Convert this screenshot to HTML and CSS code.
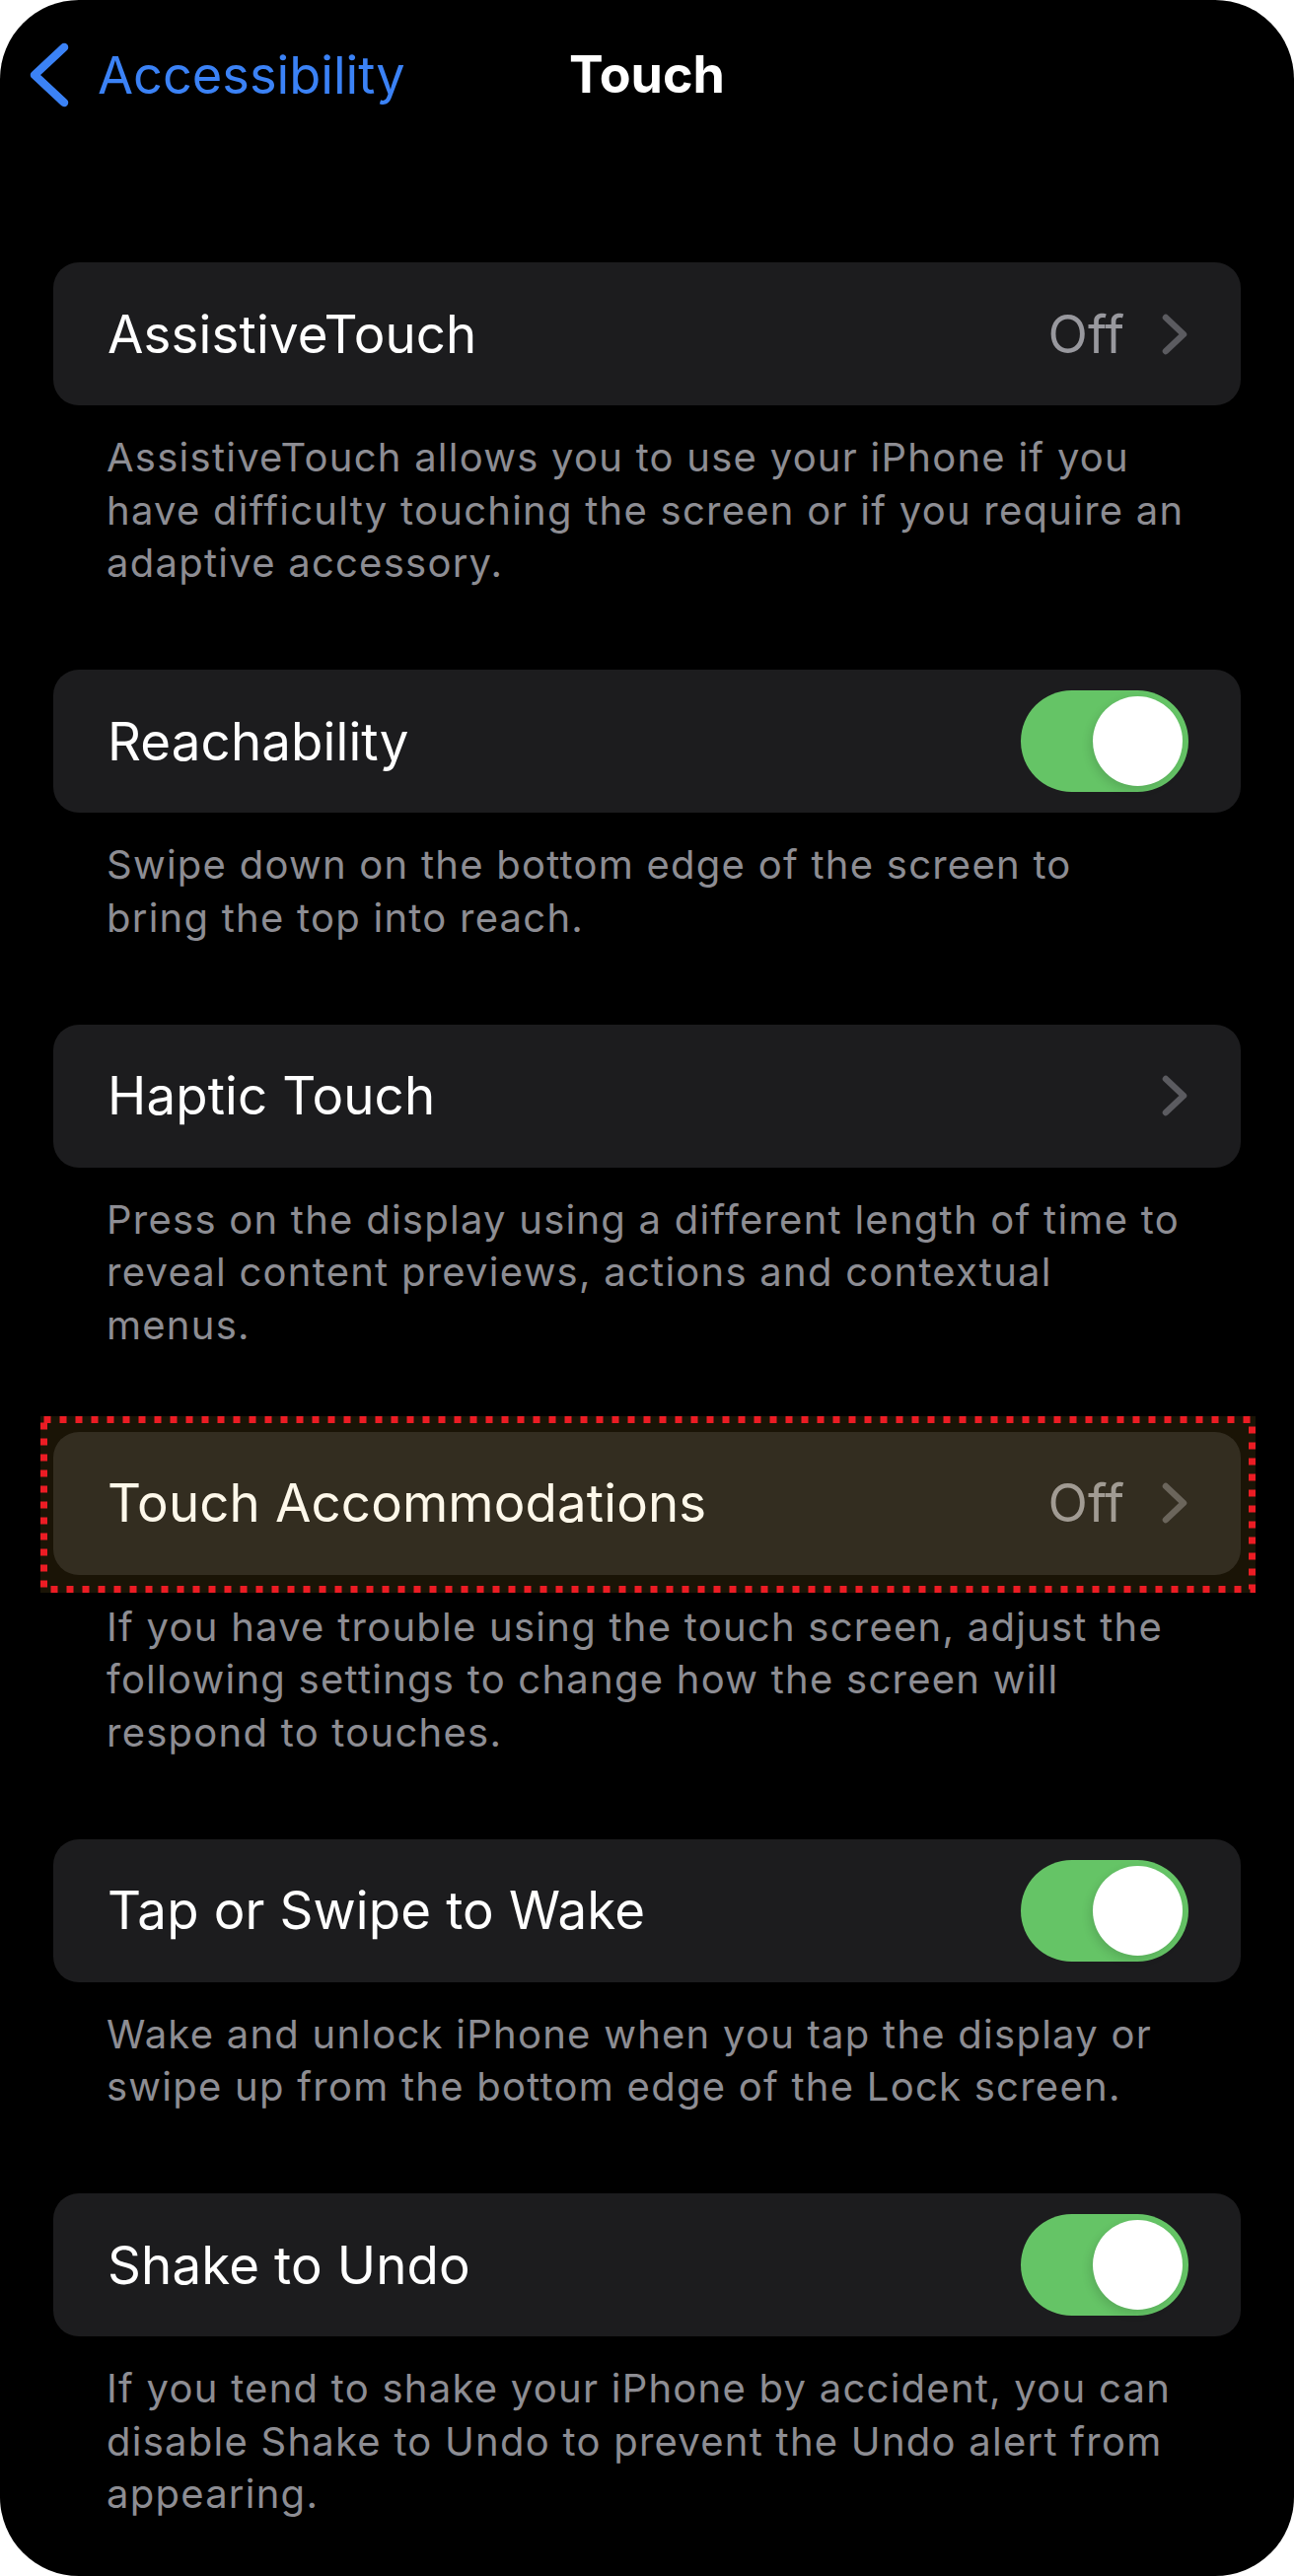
FILE: index.html
```html
<!DOCTYPE html>
<html lang="en">
<head>
<meta charset="utf-8">
<title>Touch</title>
<link rel="stylesheet" href="styles.css">
</head>
<body>
<div class="phone">
  <header class="nav">
    <a class="back">
      <svg class="back-chev" width="44" height="70" viewBox="0 0 44 70"><path d="M38 7 L8 35 L38 63" fill="none" stroke="#3b82f6" stroke-width="8.5" stroke-linecap="round" stroke-linejoin="round"/></svg>
      <span>Accessibility</span>
    </a>
    <h1 class="title">Touch</h1>
    <span></span>
  </header>
  <main class="list">
    <section class="group">
      <div class="cell">
        <span class="label">AssistiveTouch</span>
        <span class="detail">Off</span>
        <svg class="chev" width="27" height="42" viewBox="0 0 27 42"><path d="M4 4 L22 21 L4 38" fill="none" stroke="#5b5b60" stroke-width="6.5" stroke-linecap="round" stroke-linejoin="round"/></svg>
      </div>
      <p class="footer">AssistiveTouch allows you to use your iPhone if you<br>have difficulty touching the screen or if you require an<br>adaptive accessory.</p>
    </section>
    <section class="group">
      <div class="cell">
        <span class="label">Reachability</span>
        <span class="toggle"><span class="knob"></span></span>
      </div>
      <p class="footer">Swipe down on the bottom edge of the screen to<br>bring the top into reach.</p>
    </section>
    <section class="group">
      <div class="cell">
        <span class="label">Haptic Touch</span>
        <svg class="chev" width="27" height="42" viewBox="0 0 27 42"><path d="M4 4 L22 21 L4 38" fill="none" stroke="#5b5b60" stroke-width="6.5" stroke-linecap="round" stroke-linejoin="round"/></svg>
      </div>
      <p class="footer">Press on the display using a different length of time to<br>reveal content previews, actions and contextual<br>menus.</p>
    </section>
    <section class="group">
      <div class="cell">
        <span class="label">Touch Accommodations</span>
        <span class="detail">Off</span>
        <svg class="chev" width="27" height="42" viewBox="0 0 27 42"><path d="M4 4 L22 21 L4 38" fill="none" stroke="#5b5b60" stroke-width="6.5" stroke-linecap="round" stroke-linejoin="round"/></svg>
        <div class="highlight">
          <svg width="1232" height="179" viewBox="0 0 1232 179"><rect x="3.5" y="3.5" width="1225" height="172" fill="none" stroke="#ec1c24" stroke-width="7" stroke-dasharray="7 9"/></svg>
        </div>
      </div>
      <p class="footer">If you have trouble using the touch screen, adjust the<br>following settings to change how the screen will<br>respond to touches.</p>
    </section>
    <section class="group">
      <div class="cell">
        <span class="label">Tap or Swipe to Wake</span>
        <span class="toggle"><span class="knob"></span></span>
      </div>
      <p class="footer">Wake and unlock iPhone when you tap the display or<br>swipe up from the bottom edge of the Lock screen.</p>
    </section>
    <section class="group">
      <div class="cell">
        <span class="label">Shake to Undo</span>
        <span class="toggle"><span class="knob"></span></span>
      </div>
      <p class="footer">If you tend to shake your iPhone by accident, you can<br>disable Shake to Undo to prevent the Undo alert from<br>appearing.</p>
    </section>
  </main>
</div>
</body>
</html>
```

FILE: styles.css
```css
html, body {
  margin: 0;
  padding: 0;
  background: #ffffff;
}

.phone {
  width: 1312px;
  height: 2612px;
  background: #000000;
  border-radius: 80px;
  overflow: hidden;
  font-family: Inter, "Liberation Sans", Arial, sans-serif;
}

.nav {
  display: grid;
  grid-template-columns: 1fr auto 1fr;
  align-items: center;
  padding-top: 41px;
  height: 66px;
}

.back {
  display: flex;
  align-items: center;
  gap: 28px;
  padding-left: 27px;
  color: #3b82f6;
  font-size: 52.3px;
  line-height: 66px;
}

.back-chev {
  display: block;
  flex: none;
}

.title {
  margin: 0;
  color: #ffffff;
  font-size: 52px;
  font-weight: 700;
  line-height: 66px;
}

.list {
  padding: 159px 54px 0;
}

.group {
  margin-bottom: 81.5px;
}

.cell {
  position: relative;
  box-sizing: border-box;
  height: 145px;
  display: flex;
  align-items: center;
  padding: 0 53px 0 55px;
  background: #1c1c1e;
  border-radius: 26px;
  color: #ffffff;
  font-size: 52.8px;
}

.label {
  flex: 1;
  letter-spacing: 0.15px;
}

.detail {
  color: #98989e;
  margin-right: 38px;
}

.chev {
  display: block;
  flex: none;
}

.toggle {
  box-sizing: border-box;
  width: 170px;
  height: 103px;
  border-radius: 52px;
  background: #65c466;
  display: flex;
  align-items: center;
  justify-content: flex-end;
  padding: 0 6px;
}

.knob {
  width: 91px;
  height: 91px;
  border-radius: 50%;
  background: #ffffff;
  box-shadow: -3px 4px 10px rgba(0, 0, 0, 0.12);
}

.highlight {
  position: absolute;
  top: -16px;
  left: -13px;
  width: 1232px;
  height: 179px;
  background: rgba(245, 190, 60, 0.105);
  pointer-events: none;
}

.highlight svg {
  display: block;
}

.footer {
  margin: 26px 0 0;
  padding: 0 10px 0 54px;
  color: #8d8d93;
  font-size: 40px;
  line-height: 53.5px;
  letter-spacing: 1.25px;
  white-space: nowrap;
}
```
